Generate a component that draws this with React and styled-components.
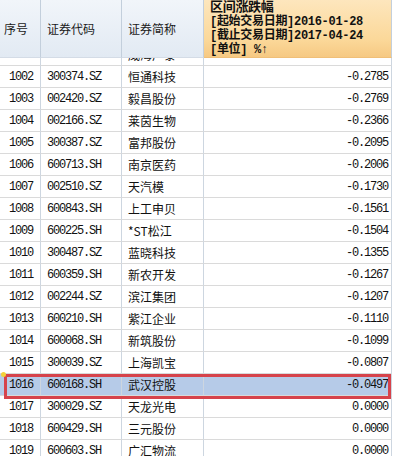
import React from 'react';
import styled, { createGlobalStyle } from 'styled-components';

const rows = [
  { no: '1001', code: '002111.SZ', name: '威海广泰', chg: '-0.3384', cut: true },
  { no: '1002', code: '300374.SZ', name: '恒通科技', chg: '-0.2785' },
  { no: '1003', code: '002420.SZ', name: '毅昌股份', chg: '-0.2769' },
  { no: '1004', code: '002166.SZ', name: '莱茵生物', chg: '-0.2366' },
  { no: '1005', code: '300387.SZ', name: '富邦股份', chg: '-0.2095' },
  { no: '1006', code: '600713.SH', name: '南京医药', chg: '-0.2006' },
  { no: '1007', code: '002510.SZ', name: '天汽模', chg: '-0.1730' },
  { no: '1008', code: '600843.SH', name: '上工申贝', chg: '-0.1561' },
  { no: '1009', code: '600225.SH', name: '*ST松江', chg: '-0.1504' },
  { no: '1010', code: '300487.SZ', name: '蓝晓科技', chg: '-0.1355' },
  { no: '1011', code: '600359.SH', name: '新农开发', chg: '-0.1267' },
  { no: '1012', code: '002244.SZ', name: '滨江集团', chg: '-0.1207' },
  { no: '1013', code: '600210.SH', name: '紫江企业', chg: '-0.1110' },
  { no: '1014', code: '600068.SH', name: '新筑股份', chg: '-0.1099' },
  { no: '1015', code: '300039.SZ', name: '上海凯宝', chg: '-0.0807' },
  { no: '1016', code: '600168.SH', name: '武汉控股', chg: '-0.0497', active: true },
  { no: '1017', code: '300029.SZ', name: '天龙光电', chg: '0.0000' },
  { no: '1018', code: '600429.SH', name: '三元股份', chg: '0.0000' },
  { no: '1019', code: '600603.SH', name: '广汇物流', chg: '0.0000' },
];

export default function App() {
  return (
    <>
      <GlobalStyle />
      <Sheet>
        <HeadRow>
          <HeadCell>序号</HeadCell>
          <HeadCell>证券代码</HeadCell>
          <HeadCell>证券简称</HeadCell>
          <RangeHead>
            <Title>区间涨跌幅</Title>
            <span>[起始交易日期]2016-01-28</span>
            <span>[截止交易日期]2017-04-24</span>
            <span>[单位] %↑</span>
          </RangeHead>
        </HeadRow>
        {rows.map((r) => (
          <Row key={r.no} $cut={r.cut} $active={r.active}>
            <Cell $mono>{r.no}</Cell>
            <Cell $mono>{r.code}</Cell>
            <Cell>{r.name}</Cell>
            <Cell $mono $right>{r.chg}</Cell>
            {r.active && <Marker />}
          </Row>
        ))}
      </Sheet>
    </>
  );
}

const GlobalStyle = createGlobalStyle`
  html, body {
    margin: 0;
    height: 456px;
    overflow: hidden;
    background: #ffffff;
  }
  body {
    font-family: "Noto Sans CJK SC", "Liberation Sans", sans-serif;
    color: #111;
  }
`;

const cols = '41px 81px 82px 188px';

const Sheet = styled.div`
  width: 392px;
  display: flex;
  flex-direction: column;
`;

const HeadRow = styled.div`
  display: grid;
  grid-template-columns: ${cols};
  height: 58px;
`;

const HeadCell = styled.div`
  display: flex;
  align-items: center;
  padding-left: 6px;
  font-size: 12px;
  color: #1a1a1a;
  background: linear-gradient(#f1f5fa, #e2eaf3);
  border-right: 1px solid #c3cfdc;
  border-bottom: 1px solid #d4dce6;
  &:first-child {
    padding-left: 4px;
  }
`;

const RangeHead = styled.div`
  display: flex;
  flex-direction: column;
  padding: 1px 0 0 6px;
  font-size: 12px;
  line-height: 14px;
  font-weight: bold;
  color: #111;
  background: linear-gradient(#fde6bd, #fbd899 70%, #f6c983);
  border-right: 1px solid #c3cfdc;
  border-bottom: 1px solid #f0bf78;
  font-family: "Liberation Mono", "Noto Sans CJK SC", monospace;
  span {
    white-space: nowrap;
    letter-spacing: -0.3px;
  }
`;

const Title = styled.span`
  font-size: 13px;
`;

const Row = styled.div`
  position: relative;
  display: grid;
  grid-template-columns: ${cols};
  grid-template-rows: ${(p) => (p.$cut ? '8px' : '22px')};
  height: ${(p) => (p.$cut ? '8px' : '22px')};
  overflow: ${(p) => (p.$cut ? 'hidden' : 'visible')};
  align-items: end;
  flex-shrink: 0;
  background: ${(p) => (p.$active ? '#b6cbe8' : '#ffffff')};
  z-index: ${(p) => (p.$active ? 1 : 0)};
  ${(p) =>
    p.$active &&
    `
    &::after {
      content: '';
      position: absolute;
      left: 4px;
      right: 1px;
      top: 0;
      bottom: -3px;
      border: 3px solid #d6434b;
      pointer-events: none;
    }
  `}
`;

const Cell = styled.div`
  height: 22px;
  box-sizing: border-box;
  display: flex;
  align-items: center;
  justify-content: ${(p) => (p.$right ? 'flex-end' : 'flex-start')};
  padding: ${(p) => (p.$right ? '0 3px 0 0' : '0 0 0 6px')};
  border-right: 1px solid #cdd6e0;
  border-bottom: 1px solid #dadada;
  font-size: 12px;
  white-space: nowrap;
  overflow: hidden;
  font-family: ${(p) =>
    p.$mono
      ? '"Liberation Mono", "DejaVu Sans Mono", monospace'
      : '"Noto Sans CJK SC", "Liberation Sans", sans-serif'};
  letter-spacing: ${(p) => (p.$mono ? '-1.2px' : '0')};
  &:first-child {
    padding-left: 9px;
  }
`;

const Marker = styled.span`
  position: absolute;
  left: 1px;
  top: -2px;
  width: 5px;
  height: 5px;
  border-radius: 50%;
  background: #f3d23a;
  z-index: 2;
`;
